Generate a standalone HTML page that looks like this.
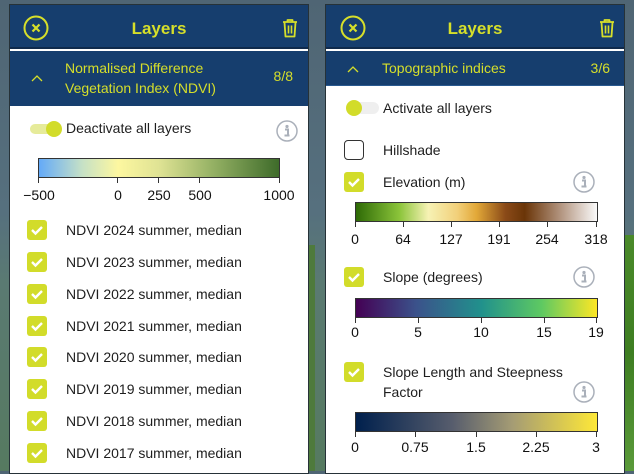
<!DOCTYPE html>
<html><head><meta charset="utf-8"><style>
*{margin:0;padding:0;box-sizing:border-box}
body{width:634px;height:471px;overflow:hidden;position:relative;font-family:"Liberation Sans",Arial,sans-serif;
background:linear-gradient(180deg,#4f6574 0%,#56707e 45%,#5a7a72 60%,#567a60 100%);}
.bgg{position:absolute;left:624px;top:235px;width:10px;height:236px;background:linear-gradient(180deg,#4a8a2a,#3e7e22 50%,#5a9a3a)}
.bgg2{position:absolute;left:308px;top:245px;width:7px;height:226px;background:#4e7a3c}
.p{position:absolute;top:4px;height:470px;background:#fff;border:1px solid #263238}
.hd{position:absolute;left:0;right:0;top:0;height:44px;background:#163e6e;border-bottom:2px solid #0f2a4c}
.sh{position:absolute;left:0;right:0;top:46px;background:#163e6e}
.y{color:#d6df2a}
.t{position:absolute;font-size:14px;color:#1e1e1e;white-space:nowrap;line-height:16px}
.cb{position:absolute;width:20px;height:20px;border-radius:3px;background:#d2dc2a}
.cb svg{position:absolute;left:3px;top:4px}
.cbe{position:absolute;width:20px;height:20px;border-radius:4px;border:1.5px solid #333;background:#fff}
.bar{position:absolute;height:20px;border:1px solid #333}
.tk{position:absolute;width:1px;height:6px;background:#333}
.lb{position:absolute;font-size:14px;color:#111;transform:translateX(-50%);line-height:16px}
.info{position:absolute;width:22px;height:22px}
</style></head><body>
<div class="bgg"></div><div class="bgg2"></div>

<!-- LEFT PANEL -->
<div class="p" style="left:9px;width:300px">
 <div class="hd">
  <svg style="position:absolute;left:13px;top:10px" width="26" height="26"><circle cx="13" cy="13" r="11.5" fill="none" stroke="#d6df2a" stroke-width="2"/><path d="M9.5 9.5l7 7M16.5 9.5l-7 7" stroke="#d6df2a" stroke-width="2.2"/></svg>
  <div class="y" style="position:absolute;left:0;right:0;top:14px;text-align:center;font-weight:bold;font-size:17px">Layers</div>
  <svg style="position:absolute;left:272px;top:13px" width="16" height="20"><path d="M1 4h14M5.5 4V2h5v2M2.5 4.5l1 14h9l1-14" fill="none" stroke="#d6df2a" stroke-width="1.8" stroke-linejoin="round"/><path d="M6.5 7.5v8M9.5 7.5v8" stroke="#d6df2a" stroke-width="1.6"/></svg>
 </div>
 <div class="sh" style="height:55px">
  <svg style="position:absolute;left:21px;top:23px" width="12" height="8"><path d="M1 7l5-5 5 5" fill="none" stroke="#d6df2a" stroke-width="1.3"/></svg>
  <div class="y" style="position:absolute;left:55px;top:7px;font-size:14px;line-height:20px">Normalised Difference<br>Vegetation Index (NDVI)</div>
  <div class="y" style="position:absolute;right:15px;top:17px;font-size:14px">8/8</div>
 </div>
 <div style="position:absolute;left:20px;top:119px;width:30px;height:10px;border-radius:5px;background:#e6eb9a"></div>
 <div style="position:absolute;left:36px;top:116px;width:16px;height:16px;border-radius:8px;background:#d2dc2a"></div>
 <div class="t" style="left:56px;top:115px">Deactivate all layers</div>
 <svg class="info" style="left:266px;top:115px" viewBox="0 0 22 22"><circle cx="11" cy="11" r="10" fill="none" stroke="#aab0ba" stroke-width="1.5"/><circle cx="11" cy="6.5" r="1.6" fill="#aab0ba"/><path d="M9 9.5h3v6h1.5M8.5 15.5h5" stroke="#aab0ba" stroke-width="2" fill="none"/></svg>
 <div class="bar" style="left:28px;top:153px;width:242px;background:linear-gradient(90deg,#64aaf8,#c6e1c6 18%,#fdf7a0 33%,#dfe394 50%,#96b265 72%,#3e6b2a)"></div>
 <div class="tk" style="left:28px;top:172px"></div><div class="tk" style="left:107px;top:172px"></div><div class="tk" style="left:148px;top:172px"></div><div class="tk" style="left:189px;top:172px"></div><div class="tk" style="left:269px;top:172px"></div>
 <div class="lb" style="left:29px;top:182px">−500</div><div class="lb" style="left:108px;top:182px">0</div><div class="lb" style="left:149px;top:182px">250</div><div class="lb" style="left:190px;top:182px">500</div><div class="lb" style="left:269px;top:182px">1000</div>
</div>

<!-- RIGHT PANEL -->
<div class="p" style="left:325px;width:300px">
 <div class="hd">
  <svg style="position:absolute;left:14px;top:10px" width="26" height="26"><circle cx="13" cy="13" r="11.5" fill="none" stroke="#d6df2a" stroke-width="2"/><path d="M9.5 9.5l7 7M16.5 9.5l-7 7" stroke="#d6df2a" stroke-width="2.2"/></svg>
  <div class="y" style="position:absolute;left:0;right:0;top:14px;text-align:center;font-weight:bold;font-size:17px">Layers</div>
  <svg style="position:absolute;left:273px;top:13px" width="16" height="20"><path d="M1 4h14M5.5 4V2h5v2M2.5 4.5l1 14h9l1-14" fill="none" stroke="#d6df2a" stroke-width="1.8" stroke-linejoin="round"/><path d="M6.5 7.5v8M9.5 7.5v8" stroke="#d6df2a" stroke-width="1.6"/></svg>
 </div>
 <div class="sh" style="height:35px;border-bottom:1px solid #2a5a90">
  <svg style="position:absolute;left:21px;top:14px" width="12" height="8"><path d="M1 7l5-5 5 5" fill="none" stroke="#d6df2a" stroke-width="1.3"/></svg>
  <div class="y" style="position:absolute;left:56px;top:9px;font-size:14px">Topographic indices</div>
  <div class="y" style="position:absolute;right:14px;top:9px;font-size:14px">3/6</div>
 </div>
 <div style="position:absolute;left:21px;top:97px;width:32px;height:12px;border-radius:6px;background:#efefef"></div>
 <div style="position:absolute;left:20px;top:95px;width:16px;height:16px;border-radius:8px;background:#d2dc2a"></div>
 <div class="t" style="left:57px;top:95px">Activate all layers</div>
 <div class="cbe" style="left:18px;top:135px"></div>
 <div class="t" style="left:57px;top:137px">Hillshade</div>

 <div class="cb" style="left:18px;top:167px"><svg width="14" height="12"><path d="M2 6l3.5 3.5L12 3" fill="none" stroke="#fff" stroke-width="2.4"/></svg></div>
 <div class="t" style="left:57px;top:169px">Elevation (m)</div>
 <svg class="info" style="left:247px;top:166px" viewBox="0 0 22 22"><circle cx="11" cy="11" r="10" fill="none" stroke="#aab0ba" stroke-width="1.5"/><circle cx="11" cy="6.5" r="1.6" fill="#aab0ba"/><path d="M9 9.5h3v6h1.5M8.5 15.5h5" stroke="#aab0ba" stroke-width="2" fill="none"/></svg>
 <div class="bar" style="left:29px;top:197px;width:243px;background:linear-gradient(90deg,#2e6a06,#8bc43a 18%,#f6f2b4 30%,#f2d07a 42%,#e2a838 50%,#8a4a18 62%,#6a3508 70%,#b39580 85%,#fafafa)"></div>
 <div class="tk" style="left:29px;top:216px"></div><div class="tk" style="left:77px;top:216px"></div><div class="tk" style="left:125px;top:216px"></div><div class="tk" style="left:173px;top:216px"></div><div class="tk" style="left:221px;top:216px"></div><div class="tk" style="left:270px;top:216px"></div>
 <div class="lb" style="left:29px;top:226px">0</div><div class="lb" style="left:77px;top:226px">64</div><div class="lb" style="left:125px;top:226px">127</div><div class="lb" style="left:173px;top:226px">191</div><div class="lb" style="left:221px;top:226px">254</div><div class="lb" style="left:270px;top:226px">318</div>

 <div class="cb" style="left:18px;top:262px"><svg width="14" height="12"><path d="M2 6l3.5 3.5L12 3" fill="none" stroke="#fff" stroke-width="2.4"/></svg></div>
 <div class="t" style="left:57px;top:264px">Slope (degrees)</div>
 <svg class="info" style="left:247px;top:261px" viewBox="0 0 22 22"><circle cx="11" cy="11" r="10" fill="none" stroke="#aab0ba" stroke-width="1.5"/><circle cx="11" cy="6.5" r="1.6" fill="#aab0ba"/><path d="M9 9.5h3v6h1.5M8.5 15.5h5" stroke="#aab0ba" stroke-width="2" fill="none"/></svg>
 <div class="bar" style="left:29px;top:293px;width:243px;background:linear-gradient(90deg,#440154,#3b528b 25%,#21918c 52%,#5ec962 77%,#fde725)"></div>
 <div class="tk" style="left:29px;top:312px"></div><div class="tk" style="left:92px;top:312px"></div><div class="tk" style="left:155px;top:312px"></div><div class="tk" style="left:218px;top:312px"></div><div class="tk" style="left:270px;top:312px"></div>
 <div class="lb" style="left:29px;top:319px">0</div><div class="lb" style="left:92px;top:319px">5</div><div class="lb" style="left:155px;top:319px">10</div><div class="lb" style="left:218px;top:319px">15</div><div class="lb" style="left:270px;top:319px">19</div>

 <div class="cb" style="left:18px;top:357px"><svg width="14" height="12"><path d="M2 6l3.5 3.5L12 3" fill="none" stroke="#fff" stroke-width="2.4"/></svg></div>
 <div class="t" style="left:57px;top:357px;line-height:20px">Slope Length and Steepness<br>Factor</div>
 <svg class="info" style="left:247px;top:376px" viewBox="0 0 22 22"><circle cx="11" cy="11" r="10" fill="none" stroke="#aab0ba" stroke-width="1.5"/><circle cx="11" cy="6.5" r="1.6" fill="#aab0ba"/><path d="M9 9.5h3v6h1.5M8.5 15.5h5" stroke="#aab0ba" stroke-width="2" fill="none"/></svg>
 <div class="bar" style="left:29px;top:407px;width:243px;background:linear-gradient(90deg,#00204d,#575d6d 40%,#a59c74 65%,#fee838)"></div>
 <div class="tk" style="left:29px;top:426px"></div><div class="tk" style="left:89px;top:426px"></div><div class="tk" style="left:150px;top:426px"></div><div class="tk" style="left:210px;top:426px"></div><div class="tk" style="left:270px;top:426px"></div>
 <div class="lb" style="left:29px;top:434px">0</div><div class="lb" style="left:89px;top:434px">0.75</div><div class="lb" style="left:150px;top:434px">1.5</div><div class="lb" style="left:210px;top:434px">2.25</div><div class="lb" style="left:270px;top:434px">3</div>
</div>

<!-- left rows -->
<div style="position:absolute;left:10px;top:0">
 <div class="cb" style="left:17px;top:220px"><svg width="14" height="12"><path d="M2 6l3.5 3.5L12 3" fill="none" stroke="#fff" stroke-width="2.4"/></svg></div><div class="t" style="left:56px;top:222px">NDVI 2024 summer, median</div>
 <div class="cb" style="left:17px;top:252px"><svg width="14" height="12"><path d="M2 6l3.5 3.5L12 3" fill="none" stroke="#fff" stroke-width="2.4"/></svg></div><div class="t" style="left:56px;top:254px">NDVI 2023 summer, median</div>
 <div class="cb" style="left:17px;top:284px"><svg width="14" height="12"><path d="M2 6l3.5 3.5L12 3" fill="none" stroke="#fff" stroke-width="2.4"/></svg></div><div class="t" style="left:56px;top:286px">NDVI 2022 summer, median</div>
 <div class="cb" style="left:17px;top:316px"><svg width="14" height="12"><path d="M2 6l3.5 3.5L12 3" fill="none" stroke="#fff" stroke-width="2.4"/></svg></div><div class="t" style="left:56px;top:318px">NDVI 2021 summer, median</div>
 <div class="cb" style="left:17px;top:347px"><svg width="14" height="12"><path d="M2 6l3.5 3.5L12 3" fill="none" stroke="#fff" stroke-width="2.4"/></svg></div><div class="t" style="left:56px;top:349px">NDVI 2020 summer, median</div>
 <div class="cb" style="left:17px;top:379px"><svg width="14" height="12"><path d="M2 6l3.5 3.5L12 3" fill="none" stroke="#fff" stroke-width="2.4"/></svg></div><div class="t" style="left:56px;top:381px">NDVI 2019 summer, median</div>
 <div class="cb" style="left:17px;top:411px"><svg width="14" height="12"><path d="M2 6l3.5 3.5L12 3" fill="none" stroke="#fff" stroke-width="2.4"/></svg></div><div class="t" style="left:56px;top:413px">NDVI 2018 summer, median</div>
 <div class="cb" style="left:17px;top:443px"><svg width="14" height="12"><path d="M2 6l3.5 3.5L12 3" fill="none" stroke="#fff" stroke-width="2.4"/></svg></div><div class="t" style="left:56px;top:445px">NDVI 2017 summer, median</div>
</div>
</body></html>
